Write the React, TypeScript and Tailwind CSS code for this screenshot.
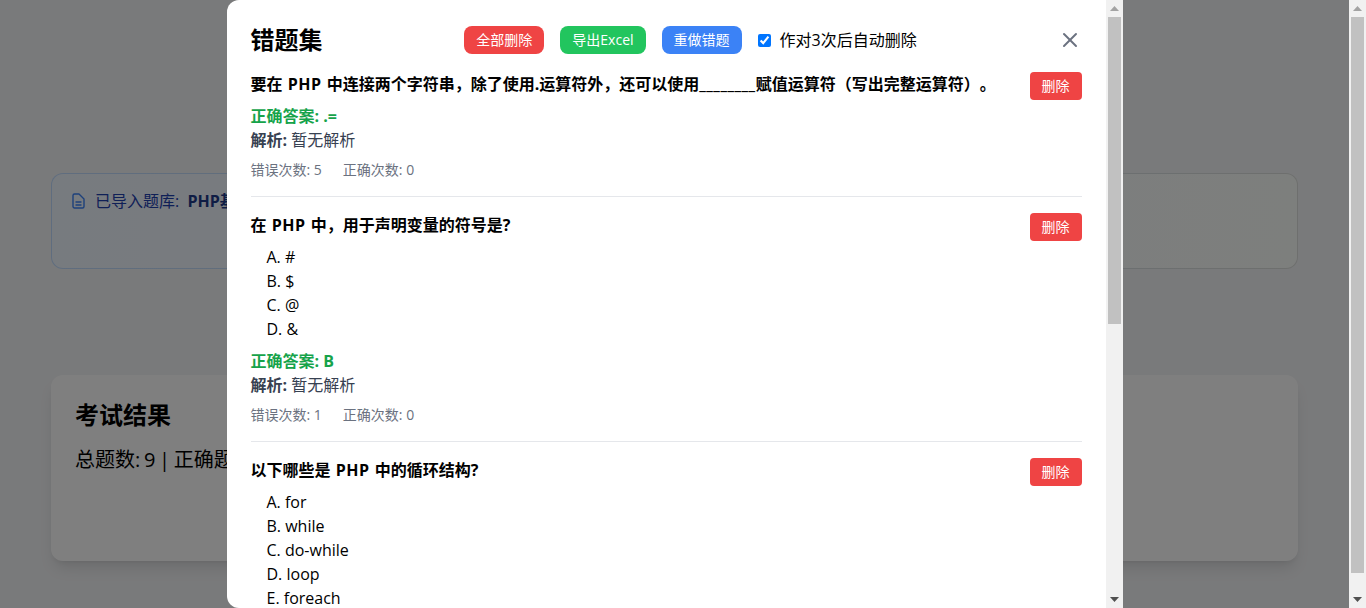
import type { ReactNode } from "react";
import { X } from "lucide-react";

const FONT = "font-['Open_Sans','Noto_Sans_CJK_SC',sans-serif] [text-spacing-trim:space-all]";

type Question = {
  id: number;
  title: ReactNode;
  options?: string[];
  answer?: string;
  wrong?: number;
  right?: number;
};

const Php = () => <span className="tracking-[0.5px]">PHP</span>;

const QUESTIONS: Question[] = [
  {
    id: 1,
    title: (
      <>
        要在 <Php /> 中连接两个字符串，除了使用.运算符外，还可以使用
        <span className="tracking-[0.47px]">________</span>
        赋值运算符（写出完整运算符）。
      </>
    ),
    answer: ".=",
    wrong: 5,
    right: 0,
  },
  {
    id: 2,
    title: (
      <>
        在 <Php /> 中，用于声明变量的符号是?
      </>
    ),
    options: ["A. #", "B. $", "C. @", "D. &"],
    answer: "B",
    wrong: 1,
    right: 0,
  },
  {
    id: 3,
    title: (
      <>
        以下哪些是 <Php /> 中的循环结构?
      </>
    ),
    options: ["A. for", "B. while", "C. do-while", "D. loop", "E. foreach"],
  },
];

function ScrollArrow({ up, color }: { up?: boolean; color: string }) {
  return (
    <div className="flex h-[17px] items-center justify-center">
      <svg width="9" height="5" viewBox="0 0 9 5" fill={color}>
        <path d={up ? "M4.5 0 9 5H0z" : "M0 0h9L4.5 5z"} />
      </svg>
    </div>
  );
}

function Scrollbar({ thumb }: { thumb: string }) {
  return (
    <div className="flex w-[17px] shrink-0 flex-col bg-[#f1f1f1]">
      <ScrollArrow up color="#a3a3a3" />
      <div className={`ml-[2px] w-[13px] bg-[#c1c1c1] ${thumb}`} />
      <div className="flex-1" />
      <ScrollArrow color="#505050" />
    </div>
  );
}

function QuestionItem({ q }: { q: Question }) {
  return (
    <div className="mb-4 border-b border-[#e5e7eb] pb-4">
      <div className="mb-1 flex items-start justify-between">
        <p className="text-base leading-6 font-bold text-black [word-spacing:1px]">{q.title}</p>
        <button className="shrink-0 rounded bg-[#ef4444] px-3 py-1 text-sm text-white">删除</button>
      </div>
      {q.options && (
        <ul className="mb-2 ml-4 text-base leading-6 text-black">
          {q.options.map((o) => (
            <li key={o}>{o}</li>
          ))}
        </ul>
      )}
      {q.answer && (
        <>
          <p className="text-base leading-6 font-bold text-[#16a34a]">正确答案: {q.answer}</p>
          <p className="text-base leading-6 text-[#374151]">
            <span className="font-bold">解析:</span> 暂无解析
          </p>
          <div className="mt-2 flex gap-[21px] text-sm leading-5 text-[#6b7280]">
            <span>错误次数: {q.wrong}</span>
            <span>正确次数: {q.right}</span>
          </div>
        </>
      )}
    </div>
  );
}

export default function App() {
  return (
    <div className={`flex h-[608px] w-full overflow-hidden bg-[#f3f4f6] ${FONT}`}>
      <main className="relative min-w-0 flex-1 px-[51px] pt-[173px]">
        <div className="h-[96px] rounded-xl bg-gradient-to-r from-[#bfdbfe] to-[#dcdfdc] p-px">
          <div className="flex h-full items-start gap-[10px] rounded-[11px] bg-gradient-to-r from-[#eff6ff] to-[#fbfefb] px-5 pt-[15px]">
            <svg
              className="mt-1 h-4 w-[13px] shrink-0 text-[#3b82f6]"
              viewBox="0 0 13 16"
              fill="none"
              stroke="currentColor"
              strokeWidth="1.4"
              strokeLinejoin="round"
              strokeLinecap="round"
            >
              <path d="M2.5 1H7l5 5v7.5a1.5 1.5 0 0 1-1.5 1.5h-8A1.5 1.5 0 0 1 1 13.5v-11A1.5 1.5 0 0 1 2.5 1z" />
              <path d="M4 9h5M4 12h5" />
            </svg>
            <p className="text-base leading-6 text-[#1e40af]">
              已导入题库: <span className="ml-1 font-bold text-[#1e3a8a]">PHP基础题库</span>
            </p>
          </div>
        </div>

        <div className="mt-[106px] h-[186px] rounded-xl bg-white p-6 shadow-lg">
          <h2 className="mb-[15px] text-2xl leading-8 font-bold text-black">考试结果</h2>
          <p className="text-xl leading-7 text-black [word-spacing:-1.5px]">总题数: 9 | 正确题数: 3 | 错误题数: 6</p>
        </div>

        <div className="absolute inset-0 flex justify-center bg-black/50">
          <div className="flex h-full w-[896px] shrink-0 overflow-hidden rounded-l-xl bg-white">
            <div className="min-w-0 flex-1 overflow-hidden pt-6 pl-6 pr-6">
              <div className="mb-4 flex h-8 items-center justify-between">
                <h2 className="text-2xl leading-8 font-bold text-black">错题集</h2>
                <div className="flex items-center gap-4">
                  <button className="rounded-lg bg-[#ef4444] px-3 py-1 text-sm text-white">全部删除</button>
                  <button className="rounded-lg bg-[#22c55e] px-3 py-1 text-sm text-white">导出Excel</button>
                  <button className="rounded-lg bg-[#3b82f6] px-3 py-1 text-sm text-white">重做错题</button>
                  <label className="flex items-center text-base leading-6 text-black">
                    <input type="checkbox" defaultChecked className="mr-[9px]" />
                    作对3次后自动删除
                  </label>
                </div>
                <button className="text-[#6b7280]">
                  <X size={24} className="-ml-px" />
                </button>
              </div>
              {QUESTIONS.map((q) => (
                <QuestionItem key={q.id} q={q} />
              ))}
            </div>
            <Scrollbar thumb="h-[307px]" />
          </div>
        </div>
      </main>
      <Scrollbar thumb="h-[556px]" />
    </div>
  );
}
